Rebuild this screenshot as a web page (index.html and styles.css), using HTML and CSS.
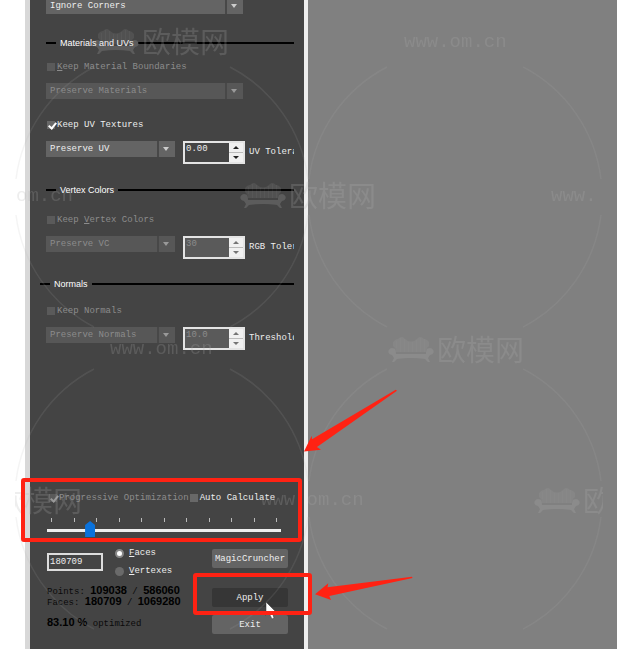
FILE: index.html
```html
<!DOCTYPE html>
<html lang="en">
<head>
  <meta charset="UTF-8" />
  <meta name="viewport" content="width=device-width, initial-scale=1.0" />
  <title>Optimize</title>
  <link rel="stylesheet" href="styles.css">
</head>
<body>
  <main class="panel">
    <div class="combo combo-wide combo-first">
      <select aria-label="Corners"><option>Ignore Corners</option></select>
    </div>

    <h2 class="group group-materials">Materials and UVs</h2>
    <label class="check off"><input type="checkbox" disabled><span><u>K</u>eep Material Boundaries</span></label>
    <div class="combo combo-wide">
      <select aria-label="Material boundaries" disabled><option>Preserve Materials</option></select>
    </div>
    <label class="check check-uv"><input type="checkbox" checked><span>Keep UV Textures</span></label>
    <div class="row">
      <div class="combo">
        <select aria-label="UV mode"><option>Preserve UV</option></select>
      </div>
      <div class="spin">
        <input id="uvTol" type="text" value="0.00">
        <div class="spin-btns"><button class="up" aria-label="Up"></button><button class="down" aria-label="Down"></button></div>
      </div>
      <label class="spin-label" for="uvTol">UV Tolera</label>
    </div>

    <h2 class="group group-colors">Vertex Colors</h2>
    <label class="check off"><input type="checkbox" disabled><span>Keep <u>V</u>ertex Colors</span></label>
    <div class="row">
      <div class="combo">
        <select aria-label="Vertex color mode" disabled><option>Preserve VC</option></select>
      </div>
      <div class="spin">
        <input id="rgbTol" type="text" value="30" disabled>
        <div class="spin-btns"><button class="up" aria-label="Up" disabled></button><button class="down" aria-label="Down" disabled></button></div>
      </div>
      <label class="spin-label" for="rgbTol">RGB Toler</label>
    </div>

    <h2 class="group group-normals">Normals</h2>
    <label class="check off"><input type="checkbox" disabled><span>Keep Normals</span></label>
    <div class="row">
      <div class="combo">
        <select aria-label="Normals mode" disabled><option>Preserve Normals</option></select>
      </div>
      <div class="spin">
        <input id="threshold" type="text" value="10.0" disabled>
        <div class="spin-btns"><button class="up" aria-label="Up" disabled></button><button class="down" aria-label="Down" disabled></button></div>
      </div>
      <label class="spin-label" for="threshold">Threshold</label>
    </div>

    <div class="progress-row">
      <label class="check off"><input type="checkbox" checked disabled><span>Progressive Optimization</span></label>
      <label class="check"><input type="checkbox"><span>Auto Calculate</span></label>
    </div>
    <div class="ticks"><i></i><i></i><i></i><i></i><i></i><i></i><i></i><i></i><i></i><i></i><i></i></div>
    <input class="slider" type="range" min="0" max="100" value="17" aria-label="Optimization level">

    <div class="bottom">
      <div class="bottom-left">
        <div class="target">
          <input class="count" type="text" value="180709" aria-label="Target count">
          <div class="radios">
            <label class="radio"><input type="radio" name="unit" checked><span><u>F</u>aces</span></label>
            <label class="radio"><input type="radio" name="unit"><span><u>V</u>ertexes</span></label>
          </div>
        </div>
        <p class="stats">Points: <b>109038</b> / <b>586060</b><br>Faces: <b>180709</b> / <b>1069280</b></p>
        <p class="stats percent"><b>83.10 %</b> optimized</p>
      </div>
      <div class="buttons">
        <button class="btn">MagicCruncher</button>
        <button class="btn btn-apply">Apply</button>
        <button class="btn">Exit</button>
      </div>
    </div>
  </main>
  <div class="viewport"></div>

  <svg class="overlay" width="617" height="649" viewBox="0 0 617 649" aria-hidden="true">
    <defs>
      <clipPath id="tile"><rect x="15" y="0" width="588" height="649" /></clipPath>
      <g id="ring" fill="none" stroke-width="1.500" opacity=".6">
        <path d="M-68 -130A147 147 0 0 0 -146 -18M68 -130A147 147 0 0 1 146 -18M-146 18A147 147 0 0 0 -68 130M146 18A147 147 0 0 1 68 130" />
      </g>
      <g id="logo">
        <path stroke="none" opacity=".6" d="M5 9V5Q7 2 10 2Q14 -2 17 2Q23 7 29 2Q32 -2 36 2Q39 2 41 5V9Q38 11 38 15H8Q8 11 5 9Z" />
        <path fill="none" stroke-width="1" opacity=".6" d="M8.500 4V11M12.500 1V15M16.500 2V15M20.500 5V15M24.500 5V15M28.500 3V15M32.500 1V15M36.500 2V15" />
        <path stroke="none" d="M4 11C8 11 8 14 8 17H38C38 14 38 11 42 11C47 12 47 17 42 18L40 21L42 25H40L37 22Q23 20 9 22L6 25H4L6 21L4 18C-1 17 -1 12 4 11Z" />
        <text class="wm-name" x="49" y="24">欧模网</text>
      </g>
    </defs>
    <g class="watermark" clip-path="url(#tile)">
      <use href="#ring" x="162" y="197" />
      <use href="#ring" x="455" y="197" />
      <use href="#ring" x="162" y="499" />
      <use href="#ring" x="455" y="499" />
      <use href="#logo" x="93" y="29" />
      <use href="#logo" x="240" y="183" />
      <use href="#logo" x="388" y="337" />
      <use href="#logo" x="-54" y="488" />
      <use href="#logo" x="534" y="488" />
      <text class="wm-url" x="404" y="47">www.om.cn</text>
      <text class="wm-url" x="110" y="354">www.om.cn</text>
      <text class="wm-url" x="551" y="201">www.</text>
      <text class="wm-url" x="16" y="201">om.cn</text>
      <text class="wm-url" x="261" y="505">www.om.cn</text>
    </g>
    <path fill="#fff" stroke="#333" stroke-width=".5" d="M266 602V616L269 613L272 619L274 618L272 612H276Z" />
    <g fill="none" stroke="#ff2213" stroke-width="4" stroke-linejoin="round">
      <rect x="23" y="480" width="277" height="60" rx="1" />
      <rect x="195" y="575" width="115" height="38" rx="1" />
    </g>
    <g fill="#ff2213">
      <path d="M304 451.500L311.700 435.700L312 439.300L395.700 389.700L397 390.700L317 447L321 449.700Z" />
      <path d="M315 594.300L328.300 583.300L327.500 587.300L412 576.700L412.500 578L329.300 596L331 600Z" />
    </g>
  </svg>
</body>
</html>
```

FILE: styles.css
```css
* {
  box-sizing: border-box;
}

body {
  margin: 0;
  padding-left: 25px;
  min-height: 100vh;
  display: flex;
  background-color: white;
  position: relative;
  overflow-x: hidden;
}

body, input, select, button {
  font-family: "Liberation Mono", monospace;
  font-size: 9px;
  color: #eee;
}

.panel {
  flex: 0 0 283px;
  display: flex;
  flex-direction: column;
  padding: 0 10px 15px 16px;
  background-color: #444;
  border-left: 5px solid #d8d8d8;
  border-right: 4px solid #eee;
  overflow: hidden;
}

.viewport {
  flex: 1;
  background-color: #808080;
}

/* drop-downs */
.combo {
  position: relative;
  flex: 0 0 129px;
  height: 16px;
}

.combo-wide {
  flex: 0 0 16px;
  width: 197px;
}

.combo-first {
  margin-top: -2px;
}

.combo select {
  appearance: none;
  display: block;
  width: 100%;
  height: 16px;
  padding: 0 20px 0 4px;
  border: none;
  border-radius: 0;
  background-color: #646464;
  opacity: 1;
}

.combo select:disabled {
  background-color: #575757;
  color: #8c8c8c;
}

.combo::before {
  content: "";
  position: absolute;
  right: 16px;
  top: 0;
  width: 2px;
  height: 16px;
  background-color: #484848;
}

.combo::after {
  content: "";
  position: absolute;
  right: 6px;
  top: 6px;
  border: 3px solid transparent;
  border-top: 4px solid #ccc;
  border-bottom: none;
}

.combo:has(:disabled)::after {
  border-top-color: #999;
}

/* section headings */
.group {
  display: flex;
  align-items: center;
  gap: 4px;
  height: 16px;
  flex-shrink: 0;
  margin: 18px 0 15px;
  font: 9px/16px "Liberation Sans", sans-serif;
  color: #fff;
  white-space: nowrap;
}

.group::before,
.group::after {
  content: "";
  width: 10px;
  height: 2px;
  background-color: #000;
}

.group::after {
  flex: 1;
}

.group-materials {
  margin: 21px 0 9px;
}

.group-normals {
  margin: 17px 0 12px -6px;
}

/* check boxes and radios */
.check {
  display: flex;
  align-items: center;
  gap: 2px;
  height: 14px;
  flex-shrink: 0;
  margin-bottom: 9px;
  padding-left: 1px;
  white-space: nowrap;
}

.check-uv {
  margin-top: 19px;
}

.off {
  color: #8c8c8c;
}

.check input {
  appearance: none;
  position: relative;
  width: 8px;
  height: 8px;
  margin: 0;
  background-color: #686868;
}

.off input {
  background-color: #5a5a5a;
}

.check input:checked::after {
  content: "";
  position: absolute;
  left: 3px;
  top: 0;
  width: 3px;
  height: 6px;
  border: solid #fff;
  border-width: 0 2px 2px 0;
  transform: rotate(40deg);
}

.off input:checked::after {
  border-color: #999;
}

.row {
  display: flex;
  align-items: flex-start;
  height: 23px;
  overflow: hidden;
}

.spin {
  display: flex;
  flex: 0 0 62px;
  min-width: 0;
  height: 23px;
  margin: 0 4px 0 8px;
  border: 2px solid #e4e4e4;
}

.spin input {
  flex: 1;
  width: 0;
  min-width: 0;
  height: 12px;
  padding: 0 1px;
  border: none;
  background: none;
  font-size: 9px;
}

.spin:has(:disabled) {
  background-color: #5a5a5a;
}

.spin input:disabled {
  color: #8c8c8c;
}

.spin-btns {
  display: flex;
  flex-direction: column;
  gap: 1px;
  width: 14px;
  background-color: #bbb;
}

.spin-btns button {
  display: flex;
  flex: 1;
  align-items: center;
  justify-content: center;
  padding: 0;
  border: none;
  background-color: #f0f0f0;
}

.spin-btns button::after {
  content: "";
  border: 3px solid transparent;
}

.spin-btns .up::after {
  border-top: none;
  border-bottom-color: #222;
}

.spin-btns .down::after {
  border-bottom: none;
  border-top-color: #222;
}

.spin-btns button:disabled::after {
  opacity: 0.6;
}

.spin-label {
  line-height: 23px;
  white-space: nowrap;
}

/* optimization level */
.progress-row {
  display: flex;
  margin-top: auto;
  padding-left: 2px;
}

.progress-row .check {
  margin-bottom: 13px;
}

.ticks {
  display: flex;
  justify-content: space-between;
  flex-shrink: 0;
  height: 4px;
  margin: 0 17px 0 5px;
}

.ticks i {
  width: 1px;
  background-color: #bbb;
}

.slider {
  appearance: none;
  flex-shrink: 0;
  height: 17px;
  margin: 0 13px 0 1px;
  background: none;
}

.slider::-webkit-slider-runnable-track {
  height: 3px;
  background-color: #eee;
}

.slider::-webkit-slider-thumb {
  appearance: none;
  width: 10px;
  height: 16px;
  margin-top: -8px;
  background-color: #0a72dc;
  clip-path: polygon(50% 0, 100% 25%, 100% 100%, 0 100%, 0 25%);
}

.bottom {
  display: flex;
  justify-content: space-between;
  margin-top: 7px;
}

.target {
  display: flex;
  gap: 12px;
  padding-left: 1px;
}

.count {
  width: 56px;
  height: 18px;
  margin-top: 7px;
  padding: 0 1px;
  border: 2px solid #ddd;
  background: none;
}

.radios {
  display: flex;
  flex-direction: column;
  gap: 4px;
}

.radio {
  display: flex;
  align-items: center;
  gap: 5px;
  height: 14px;
}

.radio input {
  appearance: none;
  width: 9px;
  height: 9px;
  margin: 0;
  border-radius: 50%;
  background-color: #6a6a6a;
}

.radio input:checked {
  border: 2px solid #888;
  background-color: #fff;
}

.stats {
  margin: 9px 0 0 1px;
  line-height: 11px;
  color: #0a0a0a;
  white-space: nowrap;
}

.stats b {
  font: bold 11px/1px "Liberation Sans", sans-serif;
  color: #000;
}

.percent {
  margin-top: 10px;
}

.buttons {
  display: flex;
  flex-direction: column;
  gap: 8px;
  margin: 3px 6px 0 0;
}

.btn {
  width: 76px;
  height: 19px;
  padding: 0;
  border: none;
  border-radius: 2px;
  background-color: #646464;
}

.btn-apply {
  margin-top: 12px;
  background-color: #363636;
}

/* watermark, frames and arrows above the page */
.overlay {
  position: absolute;
  left: 0;
  top: 0;
  pointer-events: none;
}

.watermark {
  fill: #b0b0b0;
  stroke: #b0b0b0;
  opacity: 0.22;
}

.wm-name {
  font: 29px "Noto Sans CJK SC", sans-serif;
  stroke: none;
}

.wm-url {
  font: 19px "Liberation Mono", monospace;
  stroke: none;
}
```
